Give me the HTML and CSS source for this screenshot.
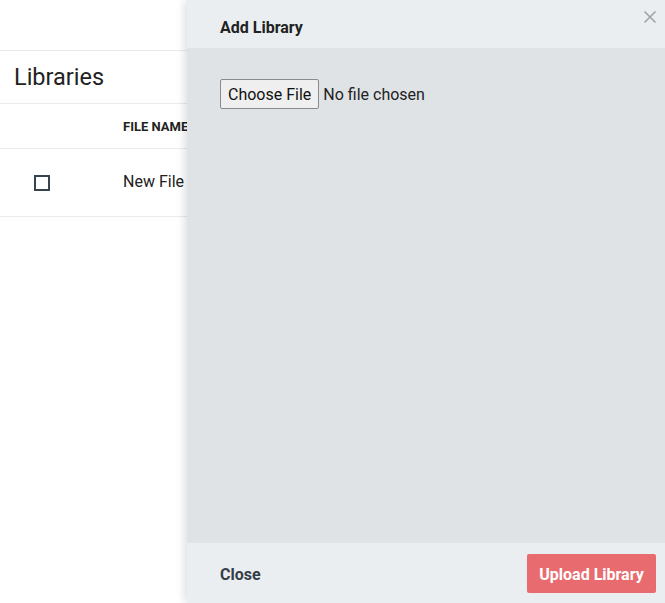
FILE: index.html
```html
<!DOCTYPE html>
<html>
<head>
<meta charset="utf-8">
<link rel="stylesheet" href="styles.css">
</head>
<body>
<div class="page">
  <div class="topbar"></div>
  <h1 class="title">Libraries</h1>
  <div class="table">
    <div class="thead">
      <div class="cell-check"></div>
      <div class="cell-name">FILE NAME</div>
    </div>
    <div class="trow">
      <div class="cell-check"><span class="checkbox"></span></div>
      <div class="cell-name">New File</div>
    </div>
  </div>
</div>
<aside class="panel">
  <div class="panel-head">
    <span class="panel-title">Add Library</span>
    <button class="x" aria-label="close">
      <svg width="14" height="14" viewBox="0 0 14 14"><path d="M1.5 1.5 L12.5 12.5 M12.5 1.5 L1.5 12.5" stroke="#9aa1a7" stroke-width="1.5" fill="none"/></svg>
    </button>
  </div>
  <div class="panel-body">
    <input type="file" class="file">
  </div>
  <div class="panel-foot">
    <button class="close-btn">Close</button>
    <button class="upload-btn">Upload Library</button>
  </div>
</aside>
</body>
</html>
```
FILE: styles.css
```css
html, body { margin: 0; padding: 0; }
body {
  font-family: Roboto, "Liberation Sans", sans-serif;
  color: #222;
  background: #fff;
  width: 665px;
  height: 603px;
  overflow: hidden;
}
.page { width: 665px; }
.topbar { height: 50px; border-bottom: 1px solid #e9ecee; }
.title {
  margin: 0;
  height: 52px;
  display: flex;
  align-items: center;
  padding-left: 14px;
  font-size: 23.5px;
  font-weight: 400;
  color: #222;
  border-bottom: 1px solid #e9ecee;
}
.thead, .trow { display: flex; align-items: center; border-bottom: 1px solid #e9ecee; }
.thead { height: 44px; font-size: 13px; font-weight: 700; color: #222; }
.trow { height: 67px; font-size: 16px; color: #222; }
.trow .cell-name { margin-top: -2px; }
.cell-check { width: 123px; display: flex; justify-content: center; padding-right: 40px; box-sizing: border-box; }
.checkbox { display: block; width: 12px; height: 12px; border: 2px solid #37434d; margin-left: 1px; margin-top: 0; }
.panel {
  position: fixed;
  top: 0; right: 0;
  width: 478px; height: 603px;
  display: flex; flex-direction: column;
  box-shadow: -3px 0 8px rgba(0,0,0,0.12);
}
.panel-head {
  height: 48px;
  background: #eaeef1;
  display: flex; align-items: center; justify-content: space-between;
  padding-left: 33px;
  padding-right: 8px;
}
.panel-title { font-size: 16px; font-weight: 700; color: #222; margin-top: 6px; }
.x { border: 0; background: none; padding: 0; align-self: flex-start; margin-top: 10px; width: 14px; height: 14px; display: flex; }
.panel-body {
  flex: 1;
  background: #dfe3e6;
  padding: 31px 33px;
}
.file { font-family: Roboto, "Liberation Sans", sans-serif; font-size: 16px; color: #222; }
.file::file-selector-button {
  font-family: Roboto, "Liberation Sans", sans-serif;
  font-size: 16px;
  height: 30px;
  padding: 0 7px;
  margin-right: 4px;
  background: #efefef;
  border: 1px solid #8a8a8a;
  border-radius: 2px;
  color: #111;
}
.panel-foot {
  height: 60px;
  background: #eaeef1;
  display: flex; align-items: center; justify-content: space-between;
  padding-left: 33px; padding-right: 9px;
}
.close-btn {
  border: 0; background: none; padding: 0;
  font-family: Roboto, "Liberation Sans", sans-serif;
  font-size: 16px; font-weight: 700; color: #353e46;
  margin-top: 2px;
}
.upload-btn {
  border: 0;
  width: 129px; height: 39px;
  background: #e86c6f;
  color: #fff;
  border-radius: 2px;
  font-family: Roboto, "Liberation Sans", sans-serif;
  font-size: 16px; font-weight: 700;
  padding: 2px 0 0;
  margin-top: 1px;
}
```
